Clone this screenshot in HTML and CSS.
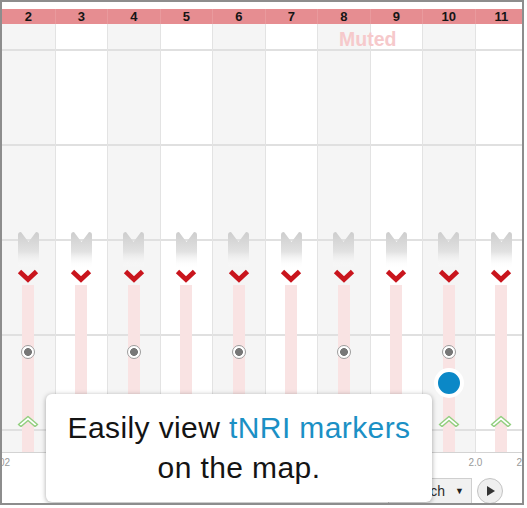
FILE: index.html
```html
<!DOCTYPE html>
<html lang="en">
<head>
  <meta charset="UTF-8">
  <title>Cycle Map</title>
  <link rel="stylesheet" href="styles.css">
</head>
<body>
  <svg class="defs" aria-hidden="true">
    <defs>
      <linearGradient id="fade" x1="0" y1="0" x2="0" y2="1">
        <stop offset="0" stop-color="#cdcdcd"/>
        <stop offset="0.55" stop-color="#e2e2e2"/>
        <stop offset="1" stop-color="#ffffff" stop-opacity="0"/>
      </linearGradient>
      <symbol id="flag" viewBox="0 0 21 36">
        <path d="M0 3Q0 0 3 0L10.5 10L18 0Q21 0 21 3V36H0Z" fill="url(#fade)"/>
      </symbol>
      <symbol id="down" viewBox="0 0 22 14">
        <path d="M2.5 2.5L11 10.5L19.5 2.5" fill="none" stroke="#c9151d" stroke-width="4.8"/>
      </symbol>
      <symbol id="up" viewBox="0 0 22 12">
        <path d="M1.5 9.5L11 1.5L20.5 9.5L18 11.5L11 5.5L4 11.5Z" fill="#fff" stroke="#93cf80" stroke-width="1.5" stroke-linejoin="round"/>
      </symbol>
    </defs>
  </svg>

  <div class="frame">
    <div class="days">
      <span>2</span><span>3</span><span>4</span><span>5</span><span>6</span>
      <span>7</span><span>8</span><span>9</span><span>10</span><span>11</span>
    </div>

    <div class="chart">
      <div class="col shade">
        <svg class="flag"><use href="#flag"/></svg>
        <svg class="down"><use href="#down"/></svg>
        <div class="track">
          <span class="pin"></span>
          <svg class="up"><use href="#up"/></svg>
        </div>
      </div>
      <div class="col">
        <svg class="flag"><use href="#flag"/></svg>
        <svg class="down"><use href="#down"/></svg>
        <div class="track">
          <svg class="up"><use href="#up"/></svg>
        </div>
      </div>
      <div class="col shade">
        <svg class="flag"><use href="#flag"/></svg>
        <svg class="down"><use href="#down"/></svg>
        <div class="track">
          <span class="pin"></span>
          <svg class="up"><use href="#up"/></svg>
        </div>
      </div>
      <div class="col">
        <svg class="flag"><use href="#flag"/></svg>
        <svg class="down"><use href="#down"/></svg>
        <div class="track">
          <svg class="up"><use href="#up"/></svg>
        </div>
      </div>
      <div class="col shade">
        <svg class="flag"><use href="#flag"/></svg>
        <svg class="down"><use href="#down"/></svg>
        <div class="track">
          <span class="pin"></span>
          <svg class="up"><use href="#up"/></svg>
        </div>
      </div>
      <div class="col">
        <svg class="flag"><use href="#flag"/></svg>
        <svg class="down"><use href="#down"/></svg>
        <div class="track">
          <svg class="up"><use href="#up"/></svg>
        </div>
      </div>
      <div class="col shade">
        <svg class="flag"><use href="#flag"/></svg>
        <svg class="down"><use href="#down"/></svg>
        <div class="track">
          <span class="pin"></span>
          <svg class="up"><use href="#up"/></svg>
        </div>
      </div>
      <div class="col">
        <svg class="flag"><use href="#flag"/></svg>
        <svg class="down"><use href="#down"/></svg>
        <div class="track">
          <svg class="up"><use href="#up"/></svg>
        </div>
      </div>
      <div class="col shade">
        <svg class="flag"><use href="#flag"/></svg>
        <svg class="down"><use href="#down"/></svg>
        <div class="track">
          <span class="pin"></span>
          <span class="here"></span>
          <svg class="up"><use href="#up"/></svg>
        </div>
      </div>
      <div class="col">
        <svg class="flag"><use href="#flag"/></svg>
        <svg class="down"><use href="#down"/></svg>
        <div class="track">
          <svg class="up"><use href="#up"/></svg>
        </div>
      </div>
    </div>

    <div class="axis">
      <div class="ticks">
        <span class="tick-first">02</span>
        <span class="tick-mid">2.0</span>
        <span class="tick-last">2</span>
      </div>
      <div class="controls">
        <div class="mode">Search <span class="caret">&#9660;</span></div>
        <div class="play"></div>
      </div>
    </div>

    <div class="muted">Muted</div>

    <div class="tip">
      Easily view <em>tNRI markers</em><br>on the map.
    </div>
  </div>
</body>
</html>
```

FILE: styles.css
```css
body {
  margin: 0;
  background: #fff;
  font-family: "Liberation Sans", Arial, sans-serif;
}
.defs {
  position: absolute;
  width: 0;
  height: 0;
}
.frame {
  position: relative;
  width: 524px;
  height: 505px;
  box-sizing: border-box;
  border: 2px solid #8d8d8d;
  overflow: hidden;
  display: flex;
  flex-direction: column;
  background: #fff;
}
.days {
  margin-top: 7px;
  display: grid;
  grid-template-columns: repeat(10, 52.5px);
  height: 15px;
  flex: none;
  background: #e68d91;
}
.days span {
  text-align: center;
  font-size: 13px;
  font-weight: bold;
  line-height: 15px;
  color: #151515;
  border-left: 1px solid #e99a9d;
}
.days span:first-child {
  border-left: none;
}
.chart {
  display: grid;
  grid-template-columns: repeat(10, 52.5px);
  height: 428px;
  flex: none;
}
.col {
  display: flex;
  flex-direction: column;
  align-items: center;
  padding-top: 208px;
  border-left: 1px solid #e3e3e3;
  background: linear-gradient(#e0e0e0 2px, transparent 2px) 0 25px / 100% 95px repeat-y, #fff;
}
.col:first-child {
  border-left: none;
}
.col.shade {
  background: linear-gradient(#e0e0e0 2px, transparent 2px) 0 25px / 100% 95px repeat-y, #f5f5f5;
}
.flag {
  display: block;
  width: 21px;
  height: 36px;
  flex: none;
}
.down {
  display: block;
  width: 22px;
  height: 14px;
  margin-top: 1px;
  flex: none;
}
.track {
  flex: 1;
  width: 12px;
  margin-top: 2px;
  background: #f9e3e3;
  display: flex;
  flex-direction: column;
  align-items: center;
}
.pin {
  flex: none;
  margin-top: 60px;
  width: 14px;
  height: 14px;
  box-sizing: border-box;
  border-radius: 50%;
  border: 1.5px solid #9d9d9d;
  background: radial-gradient(circle, #777 0 3.6px, #fff 4.2px);
}
.here {
  flex: none;
  margin-top: 9px;
  width: 22px;
  height: 22px;
  border: 4px solid #fff;
  border-radius: 50%;
  background: #0b88c7;
}
.up {
  display: block;
  flex: none;
  margin-top: auto;
  margin-bottom: 25px;
  width: 22px;
  height: 12px;
}
.axis {
  flex: 1;
  border-top: 1px solid #d3d3d3;
  display: flex;
  flex-direction: column;
}
.ticks {
  display: flex;
  font-size: 10px;
  line-height: 12px;
  color: #9a9a9a;
  padding-top: 4px;
}
.tick-first {
  margin-left: -3px;
}
.tick-mid {
  margin-left: auto;
}
.tick-last {
  margin-left: 34px;
  margin-right: 0;
}
.controls {
  margin-top: auto;
  display: flex;
  justify-content: flex-end;
  align-items: flex-end;
  gap: 5px;
  padding-right: 19px;
}
.mode {
  display: flex;
  align-items: center;
  gap: 10px;
  height: 25px;
  box-sizing: border-box;
  padding: 0 7px 0 12px;
  border: 1px solid #cfcfcf;
  border-bottom: none;
  background: #f1f1f1;
  font-size: 14px;
  color: #2a2a2a;
}
.caret {
  font-size: 9px;
  color: #222;
}
.play {
  width: 26px;
  height: 26px;
  box-sizing: border-box;
  border-radius: 50%;
  border: 1px solid #c4c4c4;
  background: #efefef;
  display: flex;
  align-items: center;
  justify-content: center;
  margin-bottom: -1px;
}
.play::after {
  content: "";
  margin-left: 2px;
  border-left: 8px solid #333;
  border-top: 5px solid transparent;
  border-bottom: 5px solid transparent;
}
.muted {
  position: absolute;
  left: 337px;
  top: 27px;
  font-size: 19.5px;
  font-weight: bold;
  line-height: 20px;
  color: #f6c9cb;
}
.tip {
  position: absolute;
  left: 44px;
  top: 392px;
  width: 386px;
  height: 108px;
  box-sizing: border-box;
  padding-top: 14px;
  background: #fff;
  border-radius: 6px;
  box-shadow: 0 1px 5px rgba(0, 0, 0, 0.35);
  text-align: center;
  font-size: 30px;
  line-height: 40px;
  letter-spacing: 0.4px;
  color: #141414;
}
.tip em {
  font-style: normal;
  color: #1b90c5;
}
```
